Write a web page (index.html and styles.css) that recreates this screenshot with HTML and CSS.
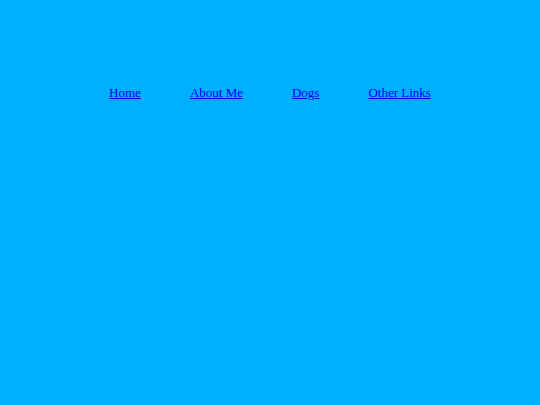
FILE: index.html
```html
<!DOCTYPE html>
<html>
<head>
<meta charset="utf-8">
<title>Home</title>
<link rel="stylesheet" href="styles.css">
</head>
<body>
<nav class="nav">
  <a href="#">Home</a>
  <a href="#">About Me</a>
  <a href="#">Dogs</a>
  <a href="#">Other Links</a>
</nav>
</body>
</html>
```
FILE: styles.css
```css
html, body {
  margin: 0;
  background: #00b0ff;
  min-height: 100%;
}
body {
  font-family: "Liberation Serif", "Times New Roman", serif;
  font-size: 13px;
}
.nav {
  display: flex;
  justify-content: center;
  gap: 49px;
  padding-top: 85px;
}
.nav a {
  color: #0000ee;
}
```
